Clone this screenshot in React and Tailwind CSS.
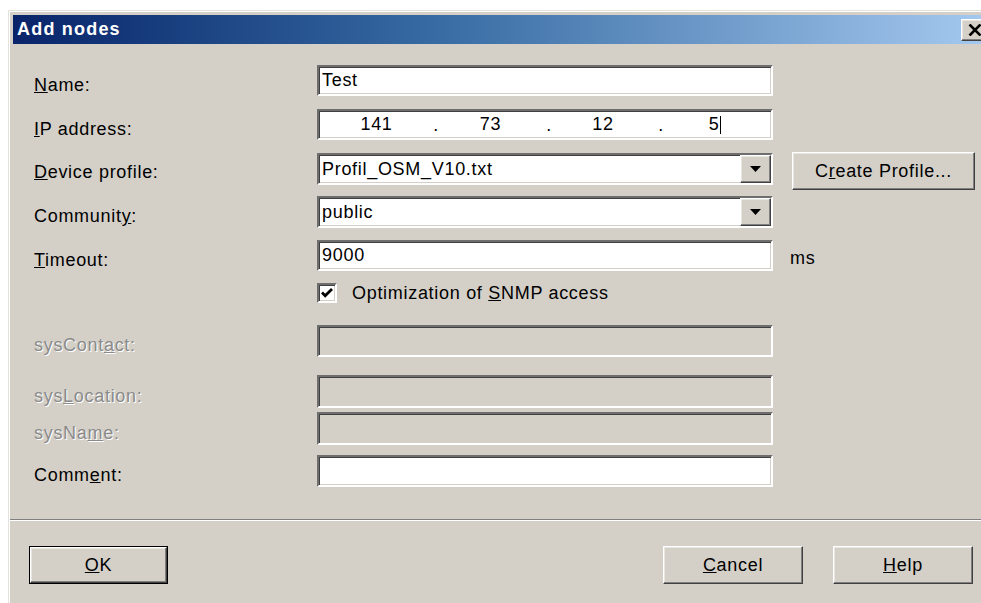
import React from 'react';

const font = "font-['Liberation_Sans',Arial,sans-serif]";

// Win2000-style bevels
const sunken =
  'border-2 border-t-[#6e6e6e] border-l-[#6e6e6e] border-b-white border-r-white shadow-[inset_1px_1px_0_#404040,inset_-1px_-1px_0_#d4d0c8]';
const raised =
  'border border-t-white border-l-white border-b-[#404040] border-r-[#404040] shadow-[inset_-1px_-1px_0_#808080,inset_1px_1px_0_#e8e6e0]';

function Label({ children, disabled }) {
  return (
    <div
      className={`w-[283px] shrink-0 pt-[8px] text-[18px] leading-[22px] ${
        disabled ? 'text-[#8a8a8a] [text-shadow:1px_1px_0_#ffffff]' : 'text-black'
      }`}
    >
      {children}
    </div>
  );
}

function Field({ value, disabled, className = '' }) {
  return (
    <div
      className={`w-[456px] h-full flex items-center pl-[3px] text-[18px] ${sunken} ${
        disabled ? 'bg-[#d4d0c8]' : 'bg-white'
      } ${className}`}
    >
      {value}
    </div>
  );
}

function Combo({ value }) {
  return (
    <div className={`w-[456px] h-full flex items-center bg-white ${sunken}`}>
      <span className="flex-1 pl-[3px] text-[18px]">{value}</span>
      <div className={`w-[31px] h-full bg-[#d4d0c8] flex items-center justify-center ${raised}`}>
        <svg width="11" height="6" viewBox="0 0 11 6">
          <path d="M0 0h11L5.5 6z" fill="#000" />
        </svg>
      </div>
    </div>
  );
}

function Button({ children, className = '', isDefault }) {
  return (
    <div className={`h-[38px] ${isDefault ? 'border border-black' : ''} ${className}`}>
      <div
        className={`h-full w-full flex items-center justify-center bg-[#d4d0c8] text-[18px] ${raised}`}
      >
        {children}
      </div>
    </div>
  );
}

function Octet({ value, dot }) {
  return (
    <div className="relative flex items-center justify-center">
      {value}
      {dot && <span className="absolute right-[-5px] bottom-[4px] leading-none">.</span>}
    </div>
  );
}

export default function App() {
  return (
    <div className={`w-[981px] h-[603px] bg-white overflow-hidden tracking-[0.7px] ${font}`}>
      <div className="ml-[8px] mt-[10px] w-[990px] h-[620px] bg-[#d4d0c8] border-l border-t border-[#e4e2dc] shadow-[inset_1px_1px_0_#ffffff] pl-[4px] pt-[4px]">
        {/* title bar */}
        <div className="h-[29px] w-[978px] flex items-center justify-between bg-linear-to-r from-[#0a246a] via-[#3a6ea5] via-45% to-[#a6caf0] pl-[4px] pr-[2px]">
          <span className="text-white font-bold text-[18px] tracking-[1.2px]">Add nodes</span>
          <div className={`w-[28px] h-[22px] bg-[#d4d0c8] flex items-center justify-center ${raised}`}>
            <svg width="14" height="12" viewBox="0 0 14 12">
              <path d="M1.5 0.5l11 11M12.5 0.5l-11 11" stroke="#000" strokeWidth="2.6" />
            </svg>
          </div>
        </div>

        <div className="pl-[21px] flex flex-col">
          <div className="mt-[21px] h-[31px] flex items-center">
            <Label><u>N</u>ame:</Label>
            <Field value="Test" />
          </div>

          <div className="mt-[13px] h-[31px] flex items-center">
            <Label><u>I</u>P address:</Label>
            <div className={`w-[456px] h-full bg-white grid grid-cols-[115px_113px_112px_1fr] text-[18px] ${sunken}`}>
              <Octet value="141" dot />
              <Octet value="73" dot />
              <Octet value="12" dot />
              <div className="flex items-center justify-center">
                5<span className="w-px h-[18px] bg-black ml-[1px]" />
              </div>
            </div>
          </div>

          <div className="mt-[13px] h-[32px] flex items-start">
            <Label><u>D</u>evice profile:</Label>
            <Combo value="Profil_OSM_V10.txt" />
            <Button className="ml-[19px] -mt-px w-[183px] h-[37px]">
              C<u>r</u>eate Profile...
            </Button>
          </div>

          <div className="mt-[11px] h-[32px] flex items-center">
            <Label>Communit<u>y</u>:</Label>
            <Combo value="public" />
          </div>

          <div className="mt-[12px] h-[31px] flex items-center">
            <Label><u>T</u>imeout:</Label>
            <Field value="9000" />
            <span className="ml-[17px] pt-[5px] text-[18px]">ms</span>
          </div>

          <div className="mt-[12px] h-[20px] flex items-center pl-[283px]">
            <div className={`w-[20px] h-[20px] bg-white flex items-center justify-center ${sunken}`}>
              <svg width="12" height="10" viewBox="0 0 12 10">
                <path d="M1 4.5l3.2 3.2L11 1" fill="none" stroke="#000" strokeWidth="2.8" />
              </svg>
            </div>
            <span className="ml-[15px] text-[18px]">
              Optimization of <u>S</u>NMP access
            </span>
          </div>

          <div className="mt-[22px] h-[32px] flex items-center">
            <Label disabled>sysCont<u>a</u>ct:</Label>
            <Field disabled />
          </div>

          <div className="mt-[18px] h-[33px] flex items-center">
            <Label disabled>sys<u>L</u>ocation:</Label>
            <Field disabled />
          </div>

          <div className="mt-[4px] h-[33px] flex items-center">
            <Label disabled>sysNa<u>m</u>e:</Label>
            <Field disabled />
          </div>

          <div className="mt-[10px] h-[32px] flex items-center">
            <Label>Comm<u>e</u>nt:</Label>
            <Field />
          </div>
        </div>

        {/* separator */}
        <div className="mt-[32px] -ml-[3px] h-[2px] border-t border-t-[#808080] border-b border-b-white" />

        <div className="mt-[25px] flex items-start pl-[16px]">
          <Button isDefault className="w-[139px]">
            <u>O</u>K
          </Button>
          <Button className="ml-[495px] w-[140px]">
            <u>C</u>ancel
          </Button>
          <Button className="ml-[30px] w-[140px]">
            <u>H</u>elp
          </Button>
        </div>
      </div>
    </div>
  );
}
